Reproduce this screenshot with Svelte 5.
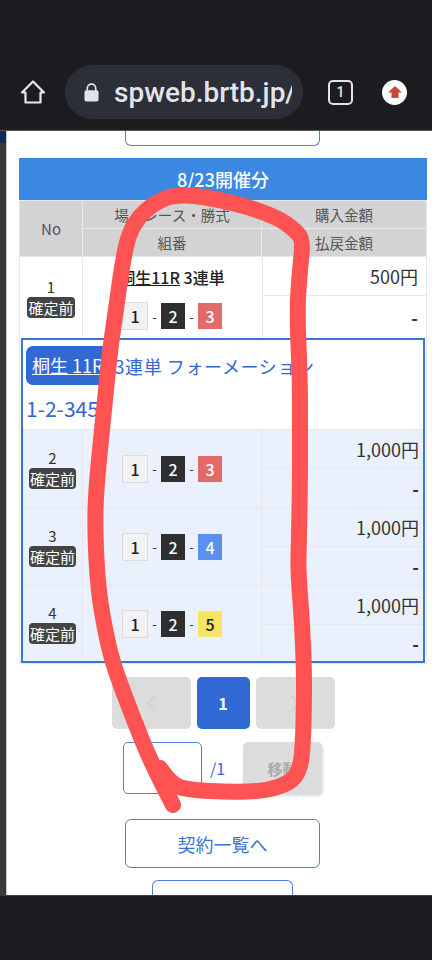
<script>
    const rows = [
        { no: 2, last: 3, amount: "1,000円" },
        { no: 3, last: 4, amount: "1,000円" },
        { no: 4, last: 5, amount: "1,000円" },
    ];

    // the red marker stroke drawn over the page, in screen coordinates
    const pts = [
        [160, 768], [172, 785], [190, 790], [230, 792], [265, 791], [290, 783], [300, 770],
        [303, 745], [304, 700], [304, 670], [302, 620], [298, 570], [299, 540], [300, 480],
        [300, 430], [300, 380], [297, 310], [300, 270], [303, 240], [295, 230], [277, 217],
        [233, 202], [178, 193], [150, 205], [130, 228], [122, 265], [116, 310], [110, 350],
        [103, 420], [96, 490], [95, 530], [98, 590], [107, 640], [115, 670], [132, 715],
        [150, 760], [173, 805],
    ];

    let scribble = `M${pts[0][0]} ${pts[0][1]}`;
    for (let i = 1; i < pts.length - 1; i++) {
        const mx = (pts[i][0] + pts[i + 1][0]) / 2;
        const my = (pts[i][1] + pts[i + 1][1]) / 2;
        scribble += ` Q${pts[i][0]} ${pts[i][1]} ${mx} ${my}`;
    }
    scribble += ` L${pts[pts.length - 1][0]} ${pts[pts.length - 1][1]}`;
</script>

<div class="screen">
    <header class="toolbar">
        <svg class="home" viewBox="0 0 26 26" width="26" height="26">
            <path d="M13 2.5 L24 13.5 H20.5 V23.5 H5.5 V13.5 H2 Z" fill="none" stroke="#e8e8ea" stroke-width="2.2" stroke-linejoin="round" />
        </svg>
        <div class="urlbar">
            <svg viewBox="0 0 16 20" width="15" height="19">
                <path d="M3.5 8 V5.5 a4.5 4.5 0 0 1 9 0 V8" fill="none" stroke="#e4e4e8" stroke-width="1.8" />
                <rect x="0.5" y="7.5" width="15" height="12" rx="2" fill="#e4e4e8" />
            </svg>
            <span class="url">spweb.brtb.jp/</span>
        </div>
        <div class="tabs">1</div>
        <div class="update">
            <svg viewBox="0 0 14 12" width="14" height="12"><path d="M7 0 L14 6.5 H10.5 V12 H3.5 V6.5 H0 Z" fill="#c44a35" /></svg>
        </div>
    </header>

    <main class="page">
        <div class="edge"><div class="edge-top"></div></div>
        <div class="content">
            <div class="cut-top"></div>

            <div class="title">8/23開催分</div>
            <div class="table">
                <div class="head">
                    <div class="th no">No</div>
                    <div class="th">場・レース・勝式</div>
                    <div class="th">購入金額</div>
                    <div class="th">組番</div>
                    <div class="th">払戻金額</div>
                </div>

                <div class="row first">
                    <div class="cell no-cell">
                        <span>1</span>
                        <span class="tag">確定前</span>
                    </div>
                    <div class="cell combo first-combo">
                        <div class="race"><u>桐生11R</u> 3連単</div>
                        <div class="balls">
                            <span class="ball b1">1</span><i>-</i><span class="ball b2">2</span><i>-</i><span class="ball b3">3</span>
                        </div>
                    </div>
                    <div class="money">
                        <div class="amount">500円</div>
                        <div class="refund">-</div>
                    </div>
                </div>

                <div class="group">
                    <div class="group-head">
                        <div class="group-line"><span class="chip">桐生 11R</span><span class="kind">3連単 フォーメーション</span></div>
                        <div class="group-nums">1-2-345</div>
                    </div>
                    {#each rows as r}
                        <div class="row tinted">
                            <div class="cell no-cell">
                                <span>{r.no}</span>
                                <span class="tag">確定前</span>
                            </div>
                            <div class="cell combo">
                                <div class="balls">
                                    <span class="ball b1">1</span><i>-</i><span class="ball b2">2</span><i>-</i><span class="ball b{r.last}">{r.last}</span>
                                </div>
                            </div>
                            <div class="money">
                                <div class="amount">{r.amount}</div>
                                <div class="refund">-</div>
                            </div>
                        </div>
                    {/each}
                </div>
            </div>

            <nav class="pager">
                <button class="pg wide" aria-label="前へ">
                    <svg viewBox="0 0 12 18" width="11" height="17"><path d="M10 1 L2 9 L10 17" fill="none" stroke="#cfcfcf" stroke-width="1.3" /></svg>
                </button>
                <button class="pg current">1</button>
                <button class="pg wide" aria-label="次へ">
                    <svg viewBox="0 0 12 18" width="11" height="17"><path d="M2 1 L10 9 L2 17" fill="none" stroke="#cfcfcf" stroke-width="1.3" /></svg>
                </button>
            </nav>

            <div class="jump">
                <div class="jump-input"></div>
                <span class="total">/1</span>
                <button class="jump-btn">移動</button>
            </div>

            <button class="outline list">契約一覧へ</button>
            <div class="cut-bottom"></div>
        </div>

        <svg class="scribble" viewBox="0 131 432 764" width="432" height="764">
            <path d={scribble} fill="none" stroke="#ff5252" stroke-width="16" stroke-linecap="round" stroke-linejoin="round" />
        </svg>
    </main>

    <footer class="bottom"></footer>
</div>

<style>
    :global(body) {
        margin: 0;
        background: #1c1c20;
    }

    .screen {
        width: 432px;
        height: 960px;
        display: flex;
        flex-direction: column;
        overflow: hidden;
        font-family: "Noto Sans CJK JP", "Noto Sans", sans-serif;
        color: #333;
    }

    .toolbar {
        flex: 0 0 131px;
        box-sizing: border-box;
        padding: 65px 0 11px 20px;
        display: flex;
        align-items: center;
        background: #1c1c20;
        border-bottom: 1px solid #55565a;
    }

    .urlbar {
        margin-left: 19px;
        width: 238px;
        height: 54px;
        box-sizing: border-box;
        padding-left: 19px;
        display: flex;
        align-items: center;
        gap: 15px;
        border-radius: 27px;
        background: #2c2e38;
        overflow: hidden;
    }

    .urlbar svg {
        flex: none;
    }

    .url {
        font-family: Roboto, sans-serif;
        font-size: 28px;
        font-weight: 500;
        color: #e4e4e8;
        white-space: nowrap;
        width: 178px;
        flex: none;
        overflow: hidden;
    }

    .tabs {
        margin-left: 25px;
        width: 25px;
        height: 25px;
        box-sizing: border-box;
        display: flex;
        align-items: center;
        justify-content: center;
        border: 2px solid #e4e4e8;
        border-radius: 5px;
        font: 500 14px Roboto, sans-serif;
        color: #e4e4e8;
    }

    .update {
        margin-left: 29px;
        width: 25px;
        height: 25px;
        display: flex;
        align-items: center;
        justify-content: center;
        border-radius: 50%;
        background: #fff;
    }

    .page {
        flex: 1;
        min-height: 0;
        position: relative;
        display: flex;
        overflow: hidden;
        background: #fff;
    }

    .edge {
        flex: 0 0 7px;
        background: #3a3a3a;
        border-right: 1px solid #c8c8c8;
        box-sizing: border-box;
    }

    .edge-top {
        height: 12px;
        background: #0f2a4e;
    }

    .content {
        flex: 1;
        min-width: 0;
        padding-left: 12px;
        padding-right: 5px;
    }

    .cut-top {
        width: 195px;
        height: 15px;
        margin: 0 auto 0 106px;
        box-sizing: border-box;
        border: 1px solid #4f7fdc;
        border-top: none;
        border-radius: 0 0 6px 6px;
    }

    .title {
        margin-top: 12px;
        height: 42px;
        line-height: 42px;
        text-align: center;
        font-size: 18px;
        font-weight: 500;
        color: #fff;
        background: #3b88e3;
    }

    .table {
        border: 1px solid #e8e8e8;
        border-top: none;
    }

    .head {
        display: grid;
        grid-template-columns: 62px 178px 1fr;
        grid-template-rows: 27px 27px;
        gap: 1px;
        background: #e8e8e8;
        padding-top: 1px;
    }

    .th {
        display: flex;
        align-items: center;
        justify-content: center;
        background: #d3d3d3;
        font-size: 14.5px;
        color: #555;
    }

    .th.no {
        grid-row: span 2;
        font-size: 15px;
    }

    .row {
        display: grid;
        grid-template-columns: 62px 180px 1fr;
        border-top: 1px solid #e8e8e8;
        box-sizing: border-box;
    }

    .first {
        height: 82px;
    }

    .row > .cell,
    .money {
        border-left: 1px solid #e8e8e8;
    }

    .row > .no-cell {
        border-left: none;
    }

    .cell {
        display: flex;
        flex-direction: column;
        align-items: center;
        justify-content: center;
    }

    .no-cell {
        font-size: 15px;
        line-height: 20px;
        color: #333;
    }

    .tag {
        padding: 0 1px;
        font-size: 15px;
        line-height: 21px;
        border-radius: 4px;
        color: #fff;
        background: #444;
    }

    .first-combo {
        gap: 9px;
        padding-top: 4px;
        padding-right: 1px;
        box-sizing: border-box;
        justify-content: flex-start;
    }

    .race {
        font-size: 16px;
        line-height: 32px;
        font-weight: 500;
        color: #222;
    }

    .balls {
        display: flex;
        align-items: center;
    }

    .balls i {
        width: 13px;
        text-align: center;
        font-style: normal;
        font-size: 13px;
        color: #333;
    }

    .ball {
        width: 24px;
        height: 26px;
        display: flex;
        align-items: center;
        justify-content: center;
        font-size: 16px;
        font-weight: 500;
        box-sizing: border-box;
    }

    .b1 {
        width: 26px;
        height: 28px;
        background: #f2f2f2;
        border: 1px solid #dcdcdc;
        color: #222;
    }

    .b2 {
        background: #2f2f2f;
        color: #fff;
    }

    .b3 {
        background: #e26a6a;
        color: #fff;
    }

    .b4 {
        background: #5b8ff0;
        color: #fff;
    }

    .b5 {
        background: #f6e465;
        color: #222;
    }

    .money {
        display: grid;
        grid-template-rows: 39px 1fr;
    }

    .amount,
    .refund {
        display: flex;
        align-items: center;
        justify-content: flex-end;
        padding-right: 8px;
        font-size: 18px;
        color: #333;
    }

    .amount {
        border-bottom: 1px solid #e8e8e8;
    }

    .refund {
        font-weight: 700;
    }

    .group {
        border: 2px solid #3d72d8;
        margin: 0 1px;
    }

    .group-head {
        padding: 6px 3px 0;
        height: 89px;
        box-sizing: border-box;
    }

    .group-line {
        display: flex;
        align-items: center;
        gap: 5px;
    }

    .chip {
        padding: 0 6px;
        height: 39px;
        line-height: 39px;
        border-radius: 7px;
        font-size: 18px;
        color: #fff;
        text-decoration: underline;
        background: #3068d4;
        white-space: nowrap;
    }

    .kind {
        font-size: 18px;
        letter-spacing: 0.6px;
        color: #3068d4;
        white-space: nowrap;
    }

    .group-nums {
        margin-top: 8px;
        font-size: 21px;
        line-height: 30px;
        color: #3068d4;
    }

    .tinted {
        height: 78px;
        background: #eaf1fd;
    }

    .tinted:last-child {
        height: 76px;
    }

    .group .row {
        grid-template-columns: 59px 179px 1fr;
    }

    .group .amount,
    .group .refund {
        padding-right: 4px;
    }

    .pager {
        margin-top: 13px;
        display: flex;
        justify-content: center;
        gap: 6px;
    }

    .pg {
        height: 52px;
        width: 53px;
        display: flex;
        align-items: center;
        justify-content: center;
        border: none;
        border-radius: 5px;
        padding: 0;
        font: 700 16px "Noto Sans CJK JP", sans-serif;
        color: #fff;
        background: #3068d4;
    }

    .pg.wide {
        width: 79px;
        background: #dcdcdc;
    }

    .jump {
        margin-top: 13px;
        display: flex;
        align-items: center;
        padding-left: 104px;
    }

    .jump-input {
        width: 79px;
        height: 52px;
        box-sizing: border-box;
        border: 1px solid #4f7fdc;
        border-radius: 5px;
    }

    .total {
        margin-left: 8px;
        width: 33px;
        font-size: 16px;
        color: #3068d4;
    }

    .jump-btn {
        width: 79px;
        height: 52px;
        border: none;
        border-radius: 5px;
        font: 700 15px "Noto Sans CJK JP", sans-serif;
        color: #aaa;
        background: #dcdcdc;
        box-shadow: 1px 2px 3px rgba(0, 0, 0, 0.15);
    }

    .outline {
        display: block;
        box-sizing: border-box;
        border: 1px solid #4f7fdc;
        border-radius: 6px;
        background: #fff;
    }

    .list {
        margin: 25px 0 0 106px;
        width: 195px;
        height: 49px;
        font: 400 18px "Noto Sans CJK JP", sans-serif;
        color: #3d72d8;
    }

    .cut-bottom {
        margin: 12px 0 0 133px;
        width: 141px;
        height: 20px;
        box-sizing: border-box;
        border: 1px solid #4f7fdc;
        border-bottom: none;
        border-radius: 6px 6px 0 0;
    }

    .scribble {
        position: absolute;
        left: 0;
        top: 0;
        pointer-events: none;
    }

    .bottom {
        flex: 0 0 65px;
        background: #1c1c20;
        border-top: 1px solid #3c3d42;
        box-sizing: border-box;
    }
</style>
